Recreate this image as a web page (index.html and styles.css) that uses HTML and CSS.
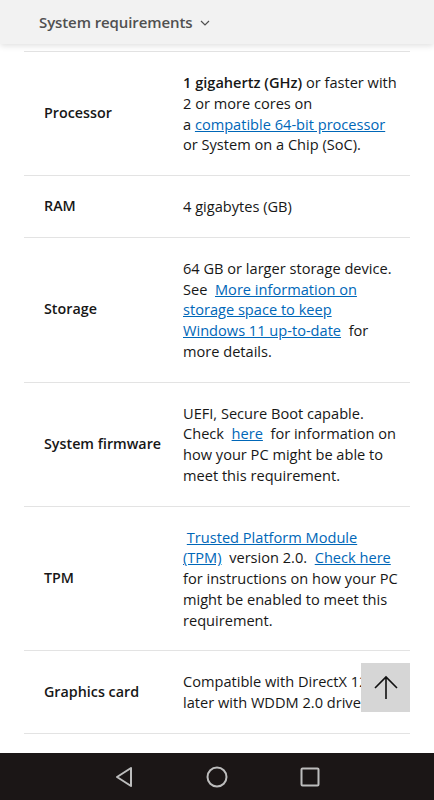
FILE: index.html
```html
<!DOCTYPE html>
<html lang="en">
<head>
<meta charset="utf-8">
<title>System requirements</title>
<link rel="stylesheet" href="styles.css">
</head>
<body>
<div class="screen">
  <header class="topbar">
    <span class="topbar-title">System requirements</span>
    <svg class="chev" width="10" height="6" viewBox="0 0 10 6"><path d="M1 1 L5 5 L9 1" fill="none" stroke="#505050" stroke-width="1.2"/></svg>
  </header>
  <main class="content">
    <table class="req">
      <tr>
        <th>Processor</th>
        <td><b>1 gigahertz (GHz)</b> or faster with<br>2 or more cores on<br>a <a href="#">compatible 64-bit processor</a><br>or System on a Chip (SoC).</td>
      </tr>
      <tr>
        <th>RAM</th>
        <td>4 gigabytes (GB)</td>
      </tr>
      <tr>
        <th>Storage</th>
        <td>64 GB or larger storage device.<br>See&nbsp; <a href="#">More information on<br>storage space to keep<br>Windows 11 up-to-date</a>&nbsp; for<br>more details.</td>
      </tr>
      <tr>
        <th>System firmware</th>
        <td>UEFI, Secure Boot capable.<br>Check&nbsp; <a href="#">here</a>&nbsp; for information on<br>how your PC might be able to<br>meet this requirement.</td>
      </tr>
      <tr>
        <th>TPM</th>
        <td>&nbsp;<a href="#">Trusted Platform Module<br>(TPM)</a>&nbsp; version 2.0.&nbsp; <a href="#">Check here</a><br>for instructions on how your PC<br>might be enabled to meet this<br>requirement.</td>
      </tr>
      <tr>
        <th>Graphics card</th>
        <td>Compatible with DirectX 12 or<br>later with WDDM 2.0 driver.</td>
      </tr>
    </table>
    <button class="totop" aria-label="Back to top">
      <svg width="26" height="26" viewBox="0 0 26 26"><path d="M13 24 V2 M2 13 L13 2 L24 13" fill="none" stroke="#111" stroke-width="1.6"/></svg>
    </button>
  </main>
  <nav class="navbar">
    <svg width="20" height="22" viewBox="0 0 20 22"><path d="M17 2 L3 11 L17 20 Z" fill="none" stroke="#bdbdbd" stroke-width="2" stroke-linejoin="round"/></svg>
    <svg width="22" height="22" viewBox="0 0 22 22"><circle cx="11" cy="11" r="9.5" fill="none" stroke="#bdbdbd" stroke-width="2"/></svg>
    <svg width="20" height="20" viewBox="0 0 20 20"><rect x="1.5" y="1.5" width="17" height="17" rx="1" fill="none" stroke="#bdbdbd" stroke-width="2"/></svg>
  </nav>
</div>
</body>
</html>
```
FILE: styles.css
```css
html, body {
  margin: 0;
  padding: 0;
  background: #fff;
}
body {
  font-family: "Open Sans", "Noto Sans", "Liberation Sans", sans-serif;
  color: #171717;
}
.screen {
  width: 434px;
  height: 800px;
  display: flex;
  flex-direction: column;
  overflow: hidden;
}
.topbar {
  flex: 0 0 44px;
  background: #f2f2f2;
  box-shadow: 0 2px 6px rgba(0,0,0,0.12);
  display: flex;
  align-items: center;
  gap: 8px;
  padding: 0 0 0 39px;
  position: relative;
  z-index: 2;
  box-sizing: border-box;
}
.topbar-title {
  font-size: 15px;
  font-weight: 600;
  color: #505050;
  letter-spacing: -0.1px;
}
.chev { margin-top: 2px; }
.content {
  flex: 1;
  position: relative;
  padding: 7px 24px 0 24px;
  overflow: hidden;
}
.req {
  width: 386px;
  border-collapse: collapse;
  font-size: 14.6px;
  line-height: 20.75px;
}
.req tr {
  border-top: 1px solid #e3e3e3;
  border-bottom: 1px solid #e3e3e3;
}
.req th {
  width: 139px;
  text-align: left;
  font-size: 14.3px;
  font-weight: 600;
  padding: 20px 0 20px 20px;
  vertical-align: middle;
  color: #171717;
}
.req td {
  padding: 20px 0 20px 0;
  vertical-align: middle;
  white-space: nowrap;
}
.req b { font-weight: 600; }
.req a {
  color: #0067b8;
  text-decoration: underline;
}
.totop {
  position: absolute;
  left: 361px;
  top: 619px;
  width: 49px;
  height: 49px;
  border: 0;
  padding: 0;
  background: #d6d6d6;
  display: flex;
  align-items: center;
  justify-content: center;
}
.navbar {
  flex: 0 0 47px;
  background: #1b1616;
  display: flex;
  align-items: center;
  justify-content: center;
  gap: 72px;
}
```
